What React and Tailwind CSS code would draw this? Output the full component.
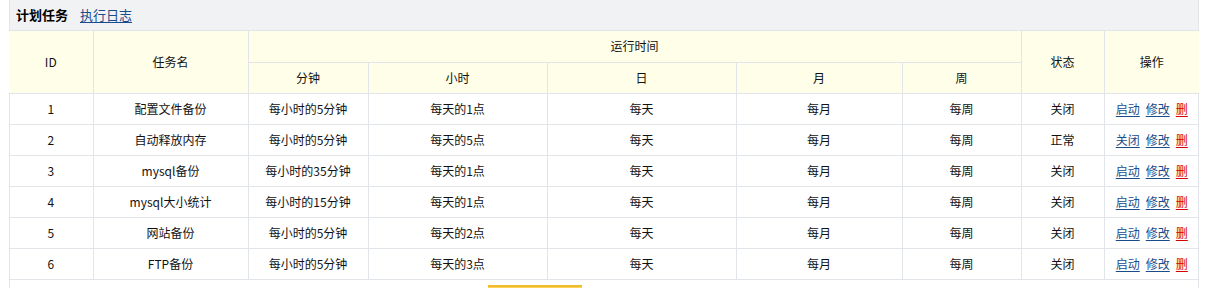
import React from "react";

const rows = [
  ["1", "配置文件备份", "每小时的5分钟", "每天的1点", "关闭", "启动"],
  ["2", "自动释放内存", "每小时的5分钟", "每天的5点", "正常", "关闭"],
  ["3", "mysql备份", "每小时的35分钟", "每天的1点", "关闭", "启动"],
  ["4", "mysql大小统计", "每小时的15分钟", "每天的1点", "关闭", "启动"],
  ["5", "网站备份", "每小时的5分钟", "每天的2点", "关闭", "启动"],
  ["6", "FTP备份", "每小时的5分钟", "每天的3点", "关闭", "启动"],
];

export default function App() {
  return (
    <div
      className="w-[1218px] h-[288px] bg-white overflow-hidden text-[12px] text-[#111]"
      style={{ fontFamily: '"Noto Sans CJK SC", "Noto Sans", sans-serif' }}
    >
      <div className="ml-[9px] w-[1190px] border-x border-[#e1e4e8] h-[288px]">
        <div className="h-[31px] bg-[#f1f2f4] flex items-center pl-[6px] gap-[12px] border-b border-[#e1e4e8] text-[13px]">
          <span className="font-bold text-[#000]">计划任务</span>
          <a className="text-[#1a4c8b] underline underline-offset-2 cursor-pointer">执行日志</a>
        </div>
        <table className="table-fixed border-collapse -mx-px w-[1190px]">
          <colgroup>
            <col className="w-[84px]" />
            <col className="w-[155px]" />
            <col className="w-[120px]" />
            <col className="w-[179px]" />
            <col className="w-[189px]" />
            <col className="w-[166px]" />
            <col className="w-[119px]" />
            <col className="w-[83px]" />
            <col className="w-[95px]" />
          </colgroup>
          <thead>
            <tr className="h-[31px] bg-[#fffee9]">
              <th rowSpan={2} className="font-normal border-r border-b border-[#e1e4e8]">ID</th>
              <th rowSpan={2} className="font-normal border border-t-0 border-[#e1e4e8]">任务名</th>
              <th colSpan={5} className="font-normal border border-t-0 border-[#e1e4e8]">运行时间</th>
              <th rowSpan={2} className="font-normal border border-t-0 border-[#e1e4e8]">状态</th>
              <th rowSpan={2} className="font-normal border-l border-b border-[#e1e4e8]">操作</th>
            </tr>
            <tr className="h-[31px] bg-[#fffee9]">
              <th className="font-normal border border-[#e1e4e8]">分钟</th>
              <th className="font-normal border border-[#e1e4e8]">小时</th>
              <th className="font-normal border border-[#e1e4e8]">日</th>
              <th className="font-normal border border-[#e1e4e8]">月</th>
              <th className="font-normal border border-[#e1e4e8]">周</th>
            </tr>
          </thead>
          <tbody>
            {rows.map((r) => (
              <tr key={r[0]} className="h-[31px] text-center">
                <td className="border-r border-b border-[#e1e4e8]">{r[0]}</td>
                <td className="border border-t-0 border-[#e1e4e8]">{r[1]}</td>
                <td className="border border-t-0 border-[#e1e4e8]">{r[2]}</td>
                <td className="border border-t-0 border-[#e1e4e8]">{r[3]}</td>
                <td className="border border-t-0 border-[#e1e4e8]">每天</td>
                <td className="border border-t-0 border-[#e1e4e8]">每月</td>
                <td className="border border-t-0 border-[#e1e4e8]">每周</td>
                <td className="border border-t-0 border-[#e1e4e8]">{r[4]}</td>
                <td className="border-l border-b border-[#e1e4e8]">
                  <span className="inline-flex gap-[6px]">
                    <a className="text-[#1a4c8b] underline underline-offset-2">{r[5]}</a>
                    <a className="text-[#1a4c8b] underline underline-offset-2">修改</a>
                    <a className="text-[#d40000] underline underline-offset-2">删</a>
                  </span>
                </td>
              </tr>
            ))}
          </tbody>
        </table>
        <div className="pl-[478px] pt-[5px]">
          <div className="w-[94px] h-[24px] bg-[#ffd45a] border-t-2 border-[#f0bb2c]" />
        </div>
      </div>
    </div>
  );
}
